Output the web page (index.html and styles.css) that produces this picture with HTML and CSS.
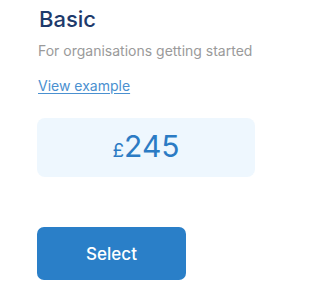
FILE: index.html
```html
<!DOCTYPE html>
<html>
<head>
<meta charset="utf-8">
<link rel="stylesheet" href="styles.css">
</head>
<body>
<div class="plan">
  <h1 class="plan-title">Basic</h1>
  <p class="plan-desc">For organisations getting started</p>
  <a class="plan-link" href="#">View example</a>
  <div class="price-box">
    <span class="currency">£</span><span class="amount">245</span>
  </div>
  <button class="select-btn">Select</button>
</div>
</body>
</html>
```
FILE: styles.css
```css
html, body {
  margin: 0;
  padding: 0;
  background: #ffffff;
}
body {
  font-family: Inter, "Noto Sans", sans-serif;
}
.plan {
  display: flex;
  flex-direction: column;
  align-items: flex-start;
  width: 218px;
  padding: 4px 0 0 37px;
}
.plan-title {
  margin: 0;
  font-size: 22px;
  line-height: 30px;
  font-weight: 500;
  color: #1e3a6b;
  padding-left: 2px;
}
.plan-desc {
  margin: 7px 0 0 0;
  font-size: 14px;
  line-height: 20px;
  color: #9a9a9a;
  padding-left: 1px;
  white-space: nowrap;
}
.plan-link {
  margin-top: 15px;
  font-size: 14px;
  line-height: 20px;
  color: #4a90d0;
  text-decoration: underline;
  text-underline-offset: 2px;
  padding-left: 1px;
}
.price-box {
  margin-top: 22px;
  align-self: stretch;
  height: 59px;
  background: #eef7fe;
  border-radius: 8px;
  display: flex;
  align-items: baseline;
  justify-content: center;
  padding-top: 10px;
  box-sizing: border-box;
  color: #2b7bc4;
}
.currency {
  font-size: 19px;
  line-height: 36px;
}
.amount {
  font-size: 30px;
  line-height: 36px;
}
.select-btn {
  margin-top: 50px;
  width: 149px;
  height: 53px;
  background: #2a7fc8;
  border: none;
  border-radius: 7px;
  color: #ffffff;
  font-family: Inter, "Noto Sans", sans-serif;
  font-size: 17px;
  font-weight: 500;
  padding: 0;
}
```
